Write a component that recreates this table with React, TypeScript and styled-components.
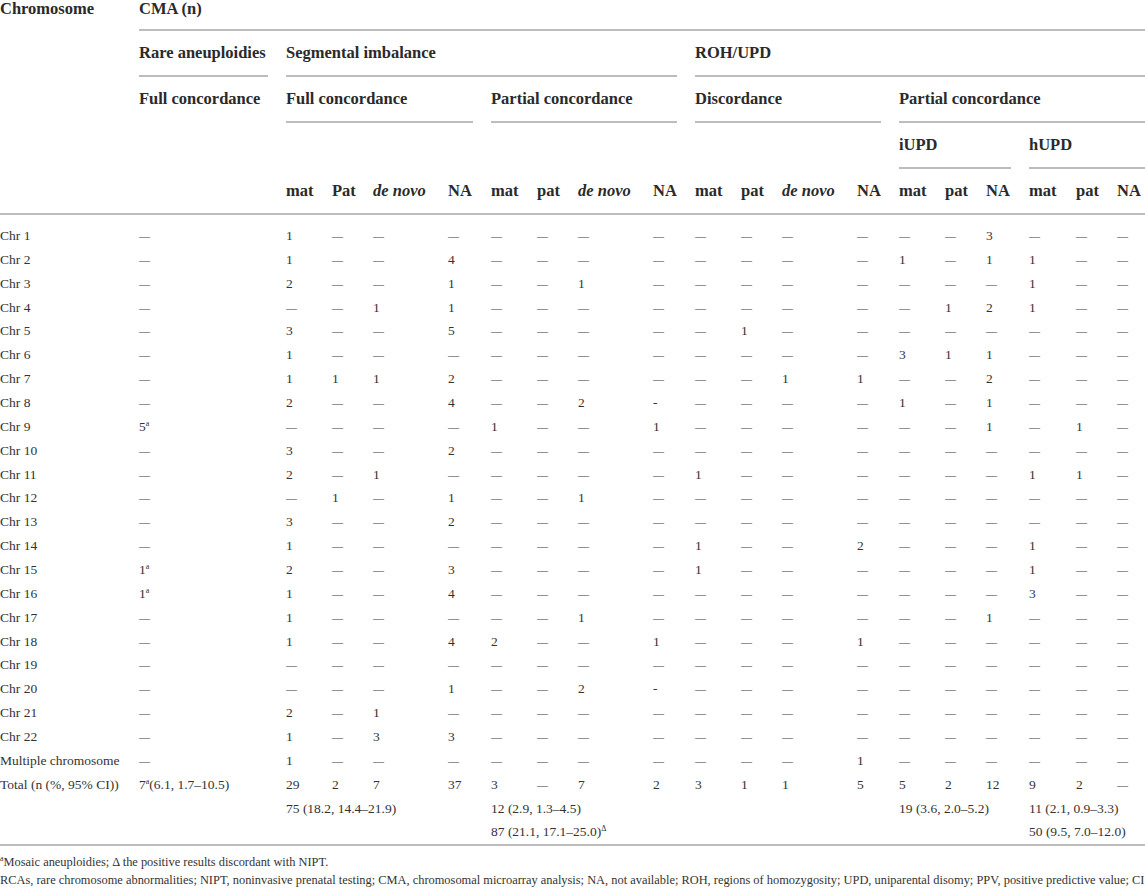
import React from "react";
import styled, { createGlobalStyle } from "styled-components";

const Global = createGlobalStyle`
  html, body { margin: 0; padding: 0; background: #ffffff; }
  body {
    font-family: "Liberation Serif", "Times New Roman", serif;
    color: #333333;
    overflow: hidden;
  }
`;

const Page = styled.div`
  width: 1145px;
  overflow: hidden;
`;

const Table = styled.table`
  width: 1145px;
  table-layout: fixed;
  border-collapse: separate;
  border-spacing: 0;
`;

const Col = styled.col<{ $w: number }>`
  width: ${(p) => p.$w}px;
`;

const HeadCell = styled.th<{ $last?: boolean; $rule?: boolean }>`
  padding: 0 ${(p) => (p.$last ? 0 : 18)}px 0 0;
  text-align: left;
  vertical-align: top;
  font-weight: 700;
  font-size: 16.5px;
  color: #2a2a2a;
  white-space: nowrap;
  border-bottom: ${(p) => (p.$rule ? "2px solid #bdbdbd" : "none")};
`;

const HeadLabel = styled.div<{ $line?: boolean; $first?: boolean; $bare?: boolean }>`
  line-height: ${(p) => (p.$first ? 18 : 22)}px;
  padding: ${(p) => (p.$first ? "0 0 11px" : "11px 0")};
  border-bottom: ${(p) =>
    p.$bare ? "none" : `2px solid ${p.$line ? "#bdbdbd" : "transparent"}`};
`;

const Italic = styled.span`
  font-style: italic;
`;

const Cell = styled.td<{ $top?: boolean; $edge?: boolean; $rule?: boolean }>`
  padding: ${(p) => (p.$top ? 13 : 4)}px ${(p) => (p.$edge ? 0 : 18)}px 4px 0;
  line-height: 15.86px;
  font-size: 13.5px;
  white-space: nowrap;
  vertical-align: top;
  color: #333333;
  border-bottom: ${(p) => (p.$rule ? "2px solid #bdbdbd" : "none")};
`;

const Dash = styled.span`
  display: inline-block;
  transform: scaleX(0.82);
  transform-origin: 0 50%;
  color: #3c3c3c;
`;

const Sup = styled.sup`
  font-size: 8px;
  line-height: 0;
  vertical-align: 5px;
`;

const Notes = styled.div`
  padding-top: 7px;
  font-size: 12.4px;
  line-height: 18px;
  color: #333333;
  white-space: nowrap;
`;

const widths = [139, 147, 46, 41, 75, 43, 46, 41, 75, 42, 46, 41, 75, 42, 46, 41, 43, 47, 41, 28];

const D = "—";
const rows: [string, string[]][] = [
  ["Chr 1", [D, "1", D, D, D, D, D, D, D, D, D, D, D, D, D, "3", D, D, D]],
  ["Chr 2", [D, "1", D, D, "4", D, D, D, D, D, D, D, D, "1", D, "1", "1", D, D]],
  ["Chr 3", [D, "2", D, D, "1", D, D, "1", D, D, D, D, D, D, D, D, "1", D, D]],
  ["Chr 4", [D, D, D, "1", "1", D, D, D, D, D, D, D, D, D, "1", "2", "1", D, D]],
  ["Chr 5", [D, "3", D, D, "5", D, D, D, D, D, "1", D, D, D, D, D, D, D, D]],
  ["Chr 6", [D, "1", D, D, D, D, D, D, D, D, D, D, D, "3", "1", "1", D, D, D]],
  ["Chr 7", [D, "1", "1", "1", "2", D, D, D, D, D, D, "1", "1", D, D, "2", D, D, D]],
  ["Chr 8", [D, "2", D, D, "4", D, D, "2", "-", D, D, D, D, "1", D, "1", D, D, D]],
  ["Chr 9", ["5^a", D, D, D, D, "1", D, D, "1", D, D, D, D, D, D, "1", D, "1", D]],
  ["Chr 10", [D, "3", D, D, "2", D, D, D, D, D, D, D, D, D, D, D, D, D, D]],
  ["Chr 11", [D, "2", D, "1", D, D, D, D, D, "1", D, D, D, D, D, D, "1", "1", D]],
  ["Chr 12", [D, D, "1", D, "1", D, D, "1", D, D, D, D, D, D, D, D, D, D, D]],
  ["Chr 13", [D, "3", D, D, "2", D, D, D, D, D, D, D, D, D, D, D, D, D, D]],
  ["Chr 14", [D, "1", D, D, D, D, D, D, D, "1", D, D, "2", D, D, D, "1", D, D]],
  ["Chr 15", ["1^a", "2", D, D, "3", D, D, D, D, "1", D, D, D, D, D, D, "1", D, D]],
  ["Chr 16", ["1^a", "1", D, D, "4", D, D, D, D, D, D, D, D, D, D, D, "3", D, D]],
  ["Chr 17", [D, "1", D, D, D, D, D, "1", D, D, D, D, D, D, D, "1", D, D, D]],
  ["Chr 18", [D, "1", D, D, "4", "2", D, D, "1", D, D, D, "1", D, D, D, D, D, D]],
  ["Chr 19", [D, D, D, D, D, D, D, D, D, D, D, D, D, D, D, D, D, D, D]],
  ["Chr 20", [D, D, D, D, "1", D, D, "2", "-", D, D, D, D, D, D, D, D, D, D]],
  ["Chr 21", [D, "2", D, "1", D, D, D, D, D, D, D, D, D, D, D, D, D, D, D]],
  ["Chr 22", [D, "1", D, "3", "3", D, D, D, D, D, D, D, D, D, D, D, D, D, D]],
  ["Multiple chromosome", [D, "1", D, D, D, D, D, D, D, D, D, D, "1", D, D, D, D, D, D]],
  ["Total (n (%, 95% CI))", ["7^a(6.1, 1.7–10.5)", "29", "2", "7", "37", "3", D, "7", "2", "3", "1", "1", "5", "5", "2", "12", "9", "2", D]],
];

function Value({ v }: { v: string }) {
  if (v === D) return <Dash>—</Dash>;
  if (v.includes("^a")) {
    const [a, b] = v.split("^a");
    return (
      <>
        {a}
        <Sup>a</Sup>
        {b}
      </>
    );
  }
  return <>{v}</>;
}

const subHeads: { t: string; it?: boolean }[] = [
  { t: "mat" }, { t: "Pat" }, { t: "de novo", it: true }, { t: "NA" },
  { t: "mat" }, { t: "pat" }, { t: "de novo", it: true }, { t: "NA" },
  { t: "mat" }, { t: "pat" }, { t: "de novo", it: true }, { t: "NA" },
  { t: "mat" }, { t: "pat" }, { t: "NA" },
  { t: "mat" }, { t: "pat" }, { t: "NA" },
];

export default function App() {
  return (
    <Page>
      <Global />
      <Table>
        <colgroup>
          {widths.map((w, i) => (
            <Col key={i} $w={w} />
          ))}
        </colgroup>
        <thead>
          <tr>
            <HeadCell rowSpan={5} $rule>
              <HeadLabel $first $bare>Chromosome</HeadLabel>
            </HeadCell>
            <HeadCell colSpan={19} $last>
              <HeadLabel $first $line>CMA (n)</HeadLabel>
            </HeadCell>
          </tr>
          <tr>
            <HeadCell>
              <HeadLabel $line>Rare aneuploidies</HeadLabel>
            </HeadCell>
            <HeadCell colSpan={8}>
              <HeadLabel $line>Segmental imbalance</HeadLabel>
            </HeadCell>
            <HeadCell colSpan={10} $last>
              <HeadLabel $line>ROH/UPD</HeadLabel>
            </HeadCell>
          </tr>
          <tr>
            <HeadCell>
              <HeadLabel>Full concordance</HeadLabel>
            </HeadCell>
            <HeadCell colSpan={4}>
              <HeadLabel $line>Full concordance</HeadLabel>
            </HeadCell>
            <HeadCell colSpan={4}>
              <HeadLabel $line>Partial concordance</HeadLabel>
            </HeadCell>
            <HeadCell colSpan={4}>
              <HeadLabel $line>Discordance</HeadLabel>
            </HeadCell>
            <HeadCell colSpan={6} $last>
              <HeadLabel $line>Partial concordance</HeadLabel>
            </HeadCell>
          </tr>
          <tr>
            <HeadCell>
              <HeadLabel>&nbsp;</HeadLabel>
            </HeadCell>
            <HeadCell colSpan={4}>
              <HeadLabel>&nbsp;</HeadLabel>
            </HeadCell>
            <HeadCell colSpan={4}>
              <HeadLabel>&nbsp;</HeadLabel>
            </HeadCell>
            <HeadCell colSpan={4}>
              <HeadLabel>&nbsp;</HeadLabel>
            </HeadCell>
            <HeadCell colSpan={3}>
              <HeadLabel $line>iUPD</HeadLabel>
            </HeadCell>
            <HeadCell colSpan={3} $last>
              <HeadLabel $line>hUPD</HeadLabel>
            </HeadCell>
          </tr>
          <tr>
            <HeadCell $rule>
              <HeadLabel $bare>&nbsp;</HeadLabel>
            </HeadCell>
            {subHeads.map((s, i) => (
              <HeadCell key={i} $rule $last={i === subHeads.length - 1}>
                <HeadLabel $bare>{s.it ? <Italic>{s.t}</Italic> : s.t}</HeadLabel>
              </HeadCell>
            ))}
          </tr>
        </thead>
        <tbody>
          {rows.map(([label, vals], r) => (
            <tr key={label}>
              <Cell $top={r === 0}>{label}</Cell>
              {vals.map((v, i) => (
                <Cell key={i} $top={r === 0} $edge={i === vals.length - 1}>
                  <Value v={v} />
                </Cell>
              ))}
            </tr>
          ))}
          <tr>
            <Cell />
            <Cell />
            <Cell colSpan={4}>75 (18.2, 14.4–21.9)</Cell>
            <Cell colSpan={4}>12 (2.9, 1.3–4.5)</Cell>
            <Cell colSpan={4} />
            <Cell colSpan={3}>19 (3.6, 2.0–5.2)</Cell>
            <Cell colSpan={3} $edge>11 (2.1, 0.9–3.3)</Cell>
          </tr>
          <tr>
            <Cell $rule />
            <Cell $rule />
            <Cell colSpan={4} $rule />
            <Cell colSpan={4} $rule>
              87 (21.1, 17.1–25.0)<Sup>Δ</Sup>
            </Cell>
            <Cell colSpan={4} $rule />
            <Cell colSpan={3} $rule />
            <Cell colSpan={3} $rule $edge>
              50 (9.5, 7.0–12.0)
            </Cell>
          </tr>
        </tbody>
      </Table>
      <Notes>
        <div>
          <Sup>a</Sup>Mosaic aneuploidies; Δ the positive results discordant with NIPT.
        </div>
        <div>
          RCAs, rare chromosome abnormalities; NIPT, noninvasive prenatal testing; CMA, chromosomal
          microarray analysis; NA, not available; ROH, regions of homozygosity; UPD, uniparental
          disomy; PPV, positive predictive value; CI, confidence interval.
        </div>
      </Notes>
    </Page>
  );
}
